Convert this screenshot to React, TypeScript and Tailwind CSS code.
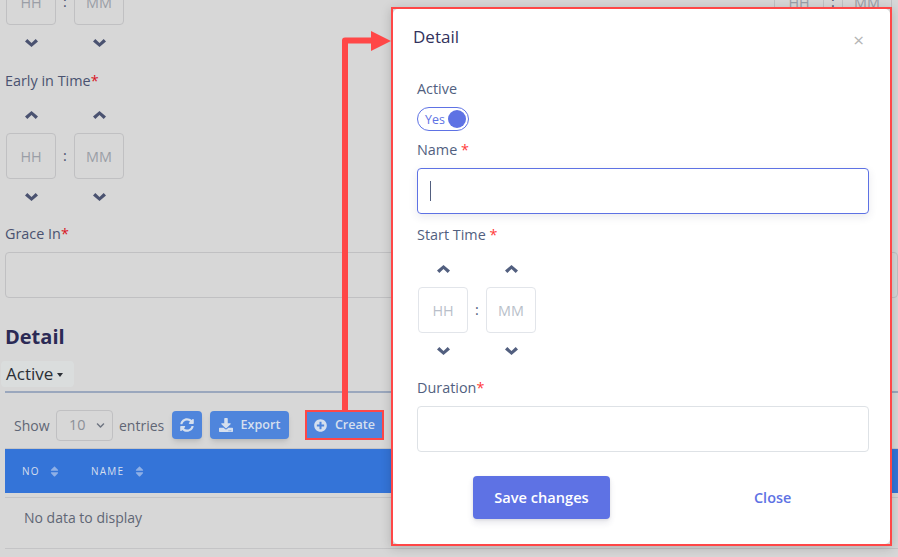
import React from 'react';
import { FaChevronDown, FaSyncAlt, FaDownload, FaPlusCircle, FaSort } from 'react-icons/fa';

const Chevron = ({ down = false }: { down?: boolean }) => (
  <svg width="13" height="8" viewBox="0 0 13 8" fill="currentColor" className={down ? 'rotate-180' : ''}>
    <path d="M6.5 0L13 5.5L10.7 8L6.5 4.1L2.3 8L0 5.5Z" />
  </svg>
);

const TimePicker = ({ dim = false }: { dim?: boolean }) => {
  const box = dim
    ? 'border-[#c0c0c2] text-[#9a9ea6]'
    : 'border-[#e2e5ea] text-[#b9bfca]';
  const arrow = dim ? 'text-[#4a5270]' : 'text-[#525f7f]';
  return (
    <div className="flex flex-col">
      <div className="flex h-[36px] items-center">
        <div className={`flex w-[50px] justify-center ${arrow}`}><Chevron /></div>
        <div className="w-[18px]" />
        <div className={`flex w-[50px] justify-center ${arrow}`}><Chevron /></div>
      </div>
      <div className="flex items-center">
        <div className={`flex h-[46px] w-[50px] items-center justify-center rounded-[4px] border pt-[2px] text-[14.4px] ${box}`}>HH</div>
        <div className={`w-[18px] text-center text-[14.4px] ${arrow}`}>:</div>
        <div className={`flex h-[46px] w-[50px] items-center justify-center rounded-[4px] border pt-[2px] text-[14.4px] ${box}`}>MM</div>
      </div>
      <div className="flex h-[36px] items-center">
        <div className={`flex w-[50px] justify-center ${arrow}`}><Chevron down /></div>
        <div className="w-[18px]" />
        <div className={`flex w-[50px] justify-center ${arrow}`}><Chevron down /></div>
      </div>
    </div>
  );
};

const Background = () => (
  <div className="flex h-[557px] w-[898px] flex-col overflow-hidden bg-[#d7d7d7] pl-[5px]">
    <div className="-mt-[57px] flex w-[893px] justify-between pl-px pr-[6px]">
      <TimePicker dim />
      <TimePicker dim />
    </div>
    <label className="mt-[10px] h-[20px] text-[14.4px] leading-[20px] text-[#4a5270]">
      Early in Time<span className="text-[#d8141f]">*</span>
    </label>
    <div className="mt-[6px] pl-px">
      <TimePicker dim />
    </div>
    <label className="mt-[9px] h-[20px] text-[14.4px] leading-[20px] text-[#4a5270]">
      Grace In<span className="text-[#d8141f]">*</span>
    </label>
    <div className="mt-[8px] h-[46px] w-[893px] rounded-[4px] border border-[#c0c0c2]" />
    <h2 className="mt-[23px] h-[32px] text-[20px] font-bold leading-[32px] text-[#2b2a55]">Detail</h2>
    <div className="-ml-[4px] mt-[8px] flex h-[26px] w-[73px] items-center rounded-[4px] bg-[#dadddd] pl-[5px] text-[17px] font-medium text-[#2b2f36]">
      Active
      <span className="ml-[4px] mt-[2px] border-x-[3.5px] border-t-[4px] border-x-transparent border-t-[#2b2f36]" />
    </div>
    <div className="mt-[4px] h-[2px] w-[893px] bg-[#9aa7bd]" />
    <div className="flex h-[56px] items-center pl-[9px] pt-[8px] text-[14px] text-[#5f6675]">
      <span className="w-[42px]">Show</span>
      <div className="flex h-[31px] w-[57px] items-center justify-between rounded-[4px] border border-[#c0c0c2] pl-[12px] pr-[7px] text-[14.4px] text-[#8c9098]">
        10
        <FaChevronDown size={9} className="text-[#6e7480]" />
      </div>
      <span className="ml-[6px] w-[53px]">entries</span>
      <div className="flex h-[28px] w-[30px] items-center justify-center rounded-[4px] bg-[#4f85dc] text-[#d5dfee] shadow-md">
        <FaSyncAlt size={14} />
      </div>
      <div className="ml-[8px] flex h-[28px] w-[79px] items-center justify-center gap-[8px] rounded-[4px] bg-[#4f85dc] text-[12.6px] font-semibold text-[#d5dfee] shadow-md">
        <FaDownload size={14} />
        Export
      </div>
      <div className="ml-[16px] flex h-[30px] w-[79px] items-center justify-center gap-[8px] border-2 border-[#ff4747] bg-[#4f85dc] text-[12.6px] font-semibold text-[#d5dfee]">
        <FaPlusCircle size={13} />
        Create
      </div>
    </div>
    <div className="-mt-[1px] h-px w-[893px] bg-[#c4c4c6]" />
    <div className="flex h-[44px] w-[893px] items-center bg-[#3474d8] text-[10px] font-medium tracking-[1.2px] text-[#d5dfee]">
      <div className="flex w-[86px] items-center gap-[8px] pl-[17px]">
        NO
        <FaSort size={13} className="text-[#8fb0e6]" />
      </div>
      <div className="flex items-center gap-[9px]">
        NAME
        <FaSort size={13} className="text-[#8fb0e6]" />
      </div>
    </div>
    <div className="mt-[4px] h-px w-[893px] bg-[#c4c4c6]" />
    <div className="flex h-[50px] w-[893px] items-center pb-[12px] pl-[19px] text-[14px] text-[#5f6675]">No data to display</div>
    <div className="h-px w-[893px] bg-[#c4c4c6]" />
  </div>
);

const Modal = () => (
  <div className="absolute left-[391px] top-[7px] h-[539px] w-[501px] border-2 border-[#ff4747] bg-[#d7d7d7] shadow-[0_2px_10px_rgba(0,0,0,0.18)]">
    <div className="relative flex h-full flex-col rounded-[5px] bg-white pl-[24px] pr-[21px]">
      <div className="-ml-[4px] mt-[16px] h-[24px] text-[17px] font-medium leading-[24px] text-[#32325d]">Detail</div>
      <span className="absolute right-[26px] top-[19px] text-[19px] leading-[24px] text-[#b5b5b5]">×</span>
      <label className="mt-[30px] h-[20px] text-[14.4px] leading-[20px] text-[#525f7f]">Active</label>
      <div className="mt-[8px] flex h-[24px] w-[52px] items-center justify-between rounded-full border border-[#5e72e4] pl-[7px] pr-[2px] text-[12.4px] font-medium text-[#5e72e4]">
        <span className="pt-[2px]">Yes</span>
        <span className="h-[18px] w-[18px] rounded-full bg-[#5e72e4]" />
      </div>
      <label className="mt-[9px] h-[20px] text-[14.4px] leading-[20px] text-[#525f7f]">
        Name <span className="text-[#ff3b3b]">*</span>
      </label>
      <div className="mt-[8px] flex h-[46px] w-[452px] items-center rounded-[4px] border border-[#5e72e4] pl-[12px] shadow-[0_3px_9px_rgba(50,50,93,0.1)]">
        <span className="h-[20px] w-px bg-[#525f7f]" />
      </div>
      <label className="mt-[11px] h-[20px] text-[14.4px] leading-[20px] text-[#525f7f]">
        Start Time <span className="text-[#ff3b3b]">*</span>
      </label>
      <div className="mt-[6px] pl-px">
        <TimePicker />
      </div>
      <label className="mt-[9px] h-[20px] text-[14.4px] leading-[20px] text-[#525f7f]">
        Duration<span className="text-[#ff3b3b]">*</span>
      </label>
      <div className="mt-[8px] h-[46px] w-[452px] rounded-[4px] border border-[#dee2e6]" />
      <div className="mt-[24px] flex items-center">
        <div className="ml-[56px] flex h-[43px] w-[137px] items-center justify-center rounded-[4px] bg-[#5e72e4] text-[14.6px] font-semibold text-white shadow-[0_4px_6px_rgba(50,50,93,0.11),0_1px_3px_rgba(0,0,0,0.08)]">
          Save changes
        </div>
        <div className="ml-[144px] text-[14.4px] font-semibold text-[#5e72e4]">Close</div>
      </div>
    </div>
  </div>
);

export default function App() {
  return (
    <div className="relative h-[557px] w-[898px] overflow-hidden font-['Open_Sans',sans-serif]">
      <Background />
      <Modal />
      {/* annotation arrow from Create to the modal */}
      <svg className="absolute left-0 top-0" width="898" height="557" viewBox="0 0 898 557" fill="none">
        <path d="M345 412V40.5H373" stroke="#ff4747" strokeWidth="6" strokeLinejoin="round" />
        <path d="M371 31L391 41L371 51Z" fill="#ff4747" />
      </svg>
    </div>
  );
}
